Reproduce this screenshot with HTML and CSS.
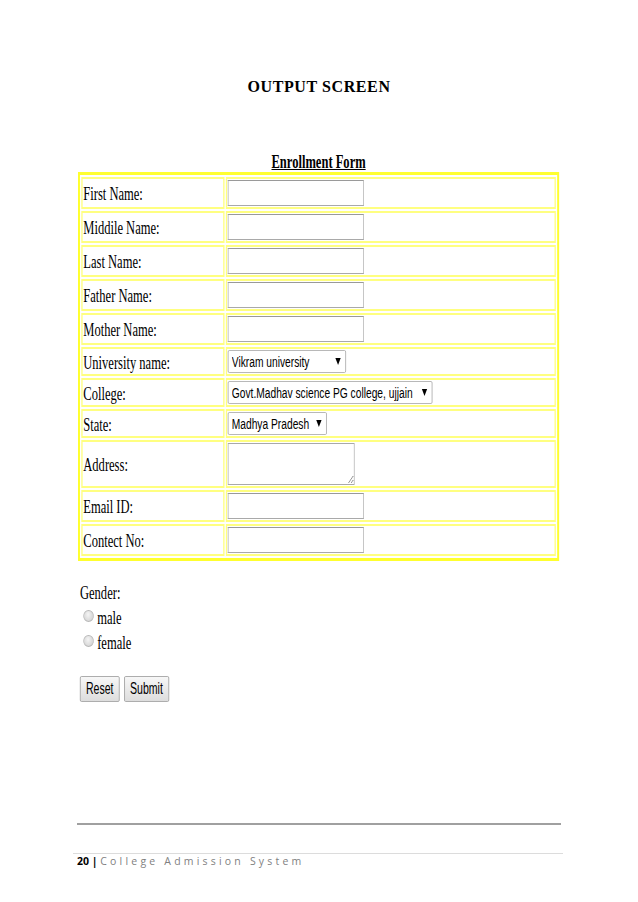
FILE: index.html
```html
<!DOCTYPE html>
<html>
<head>
<meta charset="utf-8">
<title>Output Screen</title>
<link rel="stylesheet" href="styles.css">
</head>
<body>
<div class="page">
  <h1 class="title">OUTPUT SCREEN</h1>
  <div class="shot">
    <h2 class="form-title">Enrollment Form</h2>
    <table class="form-table">
      <tr><td class="label">First Name:</td><td class="field"><input type="text"></td></tr>
      <tr><td class="label">Middile Name:</td><td class="field"><input type="text"></td></tr>
      <tr><td class="label">Last Name:</td><td class="field"><input type="text"></td></tr>
      <tr><td class="label">Father Name:</td><td class="field"><input type="text"></td></tr>
      <tr><td class="label">Mother Name:</td><td class="field"><input type="text"></td></tr>
      <tr><td class="label">University name:</td><td class="field"><span class="select"><select class="sel-uni"><option>Vikram university</option></select></span></td></tr>
      <tr><td class="label">College:</td><td class="field"><span class="select"><select class="sel-college"><option>Govt.Madhav science PG college, ujjain</option></select></span></td></tr>
      <tr><td class="label">State:</td><td class="field"><span class="select"><select class="sel-state"><option>Madhya Pradesh</option></select></span></td></tr>
      <tr><td class="label">Address:</td><td class="field"><textarea></textarea></td></tr>
      <tr><td class="label">Email ID:</td><td class="field"><input type="text"></td></tr>
      <tr><td class="label">Contect No:</td><td class="field"><input type="text"></td></tr>
    </table>
    <div class="gender">
      <div class="line">Gender:</div>
      <label class="line"><input type="radio" name="gender" class="radio">male</label>
      <label class="line"><input type="radio" name="gender" class="radio">female</label>
    </div>
    <div class="buttons">
      <button type="reset" class="btn">Reset</button>
      <button type="submit" class="btn">Submit</button>
    </div>
  </div>
  <div class="footer-rule"></div>
  <div class="footer"><span class="page-no">20 |</span> <span class="doc-name">College Admission System</span></div>
</div>
</body>
</html>
```
FILE: styles.css
```css
html, body {
  margin: 0;
  padding: 0;
  background: #fff;
}
body {
  font-family: "Liberation Serif", "Times New Roman", serif;
  color: #000;
}
.page {
  width: 638px;
  height: 902px;
  padding-top: 78px;
  box-sizing: border-box;
  overflow: hidden;
}
.title {
  margin: 0;
  font-size: 16px;
  line-height: 18px;
  font-weight: bold;
  text-align: center;
  letter-spacing: 0.6px;
}
.shot {
  margin: 55px 0 0 78px;
  width: 729px;
  transform: scaleX(0.66);
  transform-origin: 0 0;
}
.form-title {
  margin: 0;
  font-size: 19px;
  line-height: 21px;
  font-weight: bold;
  text-align: center;
  text-decoration: underline;
}
.form-table {
  width: 729px;
  table-layout: fixed;
  border-collapse: separate;
  border-spacing: 2px;
  border: 3px solid #ffff2e;
}
.form-table td {
  padding: 1px;
  border: 2px solid #ffff80;
  vertical-align: middle;
  font-size: 19px;
}
.form-table td.label {
  width: 211px;
  padding-top: 2px;
  padding-bottom: 0;
}
.field input[type="text"] {
  display: block;
  width: 206px;
  height: 26px;
  box-sizing: border-box;
  margin: 0;
  padding: 0 3px;
  border: 1px solid #a9a9a9;
  border-top-color: #9a9a9a;
  background: #fff;
}
.field textarea {
  display: block;
  width: 192px;
  height: 42px;
  box-sizing: border-box;
  margin: 0;
  border: 1px solid #a9a9a9;
  background: #fff;
}
.select {
  display: block;
  width: fit-content;
  position: relative;
}
.select select {
  -webkit-appearance: none;
  appearance: none;
  display: block;
  height: 23px;
  box-sizing: border-box;
  margin: 0;
  padding: 0 0 0 5px;
  border: 1px solid #a9a9a9;
  border-radius: 2px;
  background: #fff;
  color: #000;
  font-family: "Liberation Sans", Arial, sans-serif;
  font-size: 15.5px;
}
.select::after {
  content: "";
  position: absolute;
  top: 8px;
  right: 8px;
  border-left: 4px solid transparent;
  border-right: 4px solid transparent;
  border-top: 7px solid #000;
}
.sel-uni { width: 179px; }
.sel-college { width: 310px; }
.sel-state { width: 150px; }
.gender {
  margin-top: 19px;
  padding-left: 3px;
  font-size: 19px;
  line-height: 25px;
}
.line {
  display: block;
}
.radio {
  -webkit-appearance: none;
  appearance: none;
  display: inline-block;
  width: 16px;
  height: 12px;
  box-sizing: border-box;
  margin: 0 5px 2px 5px;
  border: 1px solid #b8b8b8;
  border-radius: 50%;
  background: radial-gradient(circle at 45% 35%, #f5f5f5 0%, #d6d6d6 70%, #c8c8c8 100%);
  vertical-align: baseline;
}
.buttons {
  margin-top: 21px;
  padding-left: 3px;
  display: flex;
  gap: 7px;
}
.btn {
  height: 26px;
  margin: 0;
  padding: 0 8px;
  border: 1px solid #9c9c9c;
  border-radius: 2px;
  background: linear-gradient(#f7f7f7, #dddddd);
  color: #000;
  font-family: "Liberation Sans", Arial, sans-serif;
  font-size: 16px;
}
.footer-rule {
  margin: 121px 0 0 77px;
  width: 484px;
  height: 2px;
  background: #a0a0a0;
}
.footer {
  margin: 28px 0 0 73px;
  width: 490px;
  padding-left: 4px;
  border-top: 1px solid #dcdcdc;
  box-sizing: border-box;
  font-family: "Open Sans", "Liberation Sans", sans-serif;
  font-size: 10.5px;
  line-height: 14px;
}
.page-no {
  font-weight: bold;
  color: #000;
}
.doc-name {
  color: #7f7f7f;
  letter-spacing: 3.2px;
}
```
